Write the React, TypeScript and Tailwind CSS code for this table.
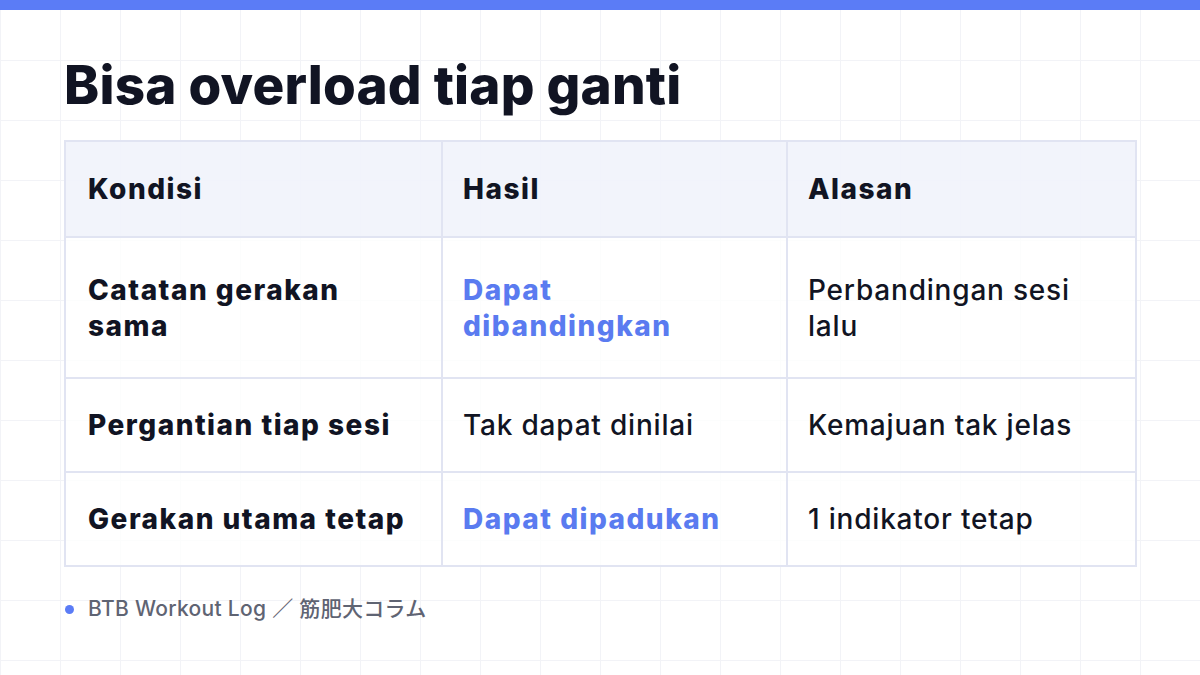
const rows = [
  { k: "Catatan gerakan\nsama", h: "Dapat\ndibandingkan", a: "Perbandingan sesi\nlalu", good: true, tall: true },
  { k: "Pergantian tiap sesi", h: "Tak dapat dinilai", a: "Kemajuan tak jelas", good: false, tall: false },
  { k: "Gerakan utama tetap", h: "Dapat dipadukan", a: "1 indikator tetap", good: true, tall: false },
];

const App = () => {
  return (
    <div
      className="relative w-[1200px] h-[675px] overflow-hidden bg-white text-[#111423]"
      style={{
        fontFamily: "Inter, 'Noto Sans CJK JP', sans-serif",
        backgroundImage:
          "linear-gradient(to right, #f2f3f7 1px, transparent 1px), linear-gradient(to bottom, #f2f3f7 1px, transparent 1px)",
        backgroundSize: "60px 60px",
      }}
    >
      {/* Top accent bar */}
      <div className="h-[10px] bg-[#5b7cf6]" />

      <div className="pl-[64px] pt-[44px]">
        <h1 className="text-[53px] leading-[62px] font-extrabold tracking-[0.2px]">Bisa overload tiap ganti</h1>

        <table className="mt-[24px] w-[1071px] table-fixed border-collapse border-2 border-[#e1e4f2] text-[28px] leading-[36px]">
          <colgroup>
            <col className="w-[377px]" />
            <col className="w-[345px]" />
            <col className="w-[349px]" />
          </colgroup>
          <thead>
            <tr className="h-[96px] bg-[#f1f3fb]/90">
              <th className="border-2 border-[#e1e4f2] px-[22px] text-left font-extrabold tracking-[1.5px]">Kondisi</th>
              <th className="border-2 border-[#e1e4f2] px-[20px] text-left font-extrabold tracking-[1.5px]">Hasil</th>
              <th className="border-2 border-[#e1e4f2] px-[20px] text-left font-extrabold tracking-[1.5px]">Alasan</th>
            </tr>
          </thead>
          <tbody>
            {rows.map((r) => (
              <tr key={r.k} className={`${r.tall ? "h-[141px]" : "h-[94px]"} bg-white/80`}>
                <td className="whitespace-pre-line border-2 border-[#e1e4f2] px-[22px] font-extrabold tracking-[1.5px]">{r.k}</td>
                <td
                  className={`whitespace-pre-line border-2 border-[#e1e4f2] px-[20px] ${
                    r.good ? "font-extrabold tracking-[1.5px] text-[#5a7bf0]" : "font-medium tracking-[0.8px]"
                  }`}
                >
                  {r.h}
                </td>
                <td className="whitespace-pre-line border-2 border-[#e1e4f2] px-[20px] font-medium tracking-[0.8px]">{r.a}</td>
              </tr>
            ))}
          </tbody>
        </table>

        <div className="mt-[28px] flex items-center gap-[14px] text-[21px] leading-[28px] text-[#5f6473] font-medium tracking-[0.3px]">
          <span className="ml-[1px] h-[9px] w-[9px] rounded-full bg-[#5b7cf6]" />
          <span>BTB Workout Log ／ 筋肥大コラム</span>
        </div>
      </div>
    </div>
  );
};

export default App;
